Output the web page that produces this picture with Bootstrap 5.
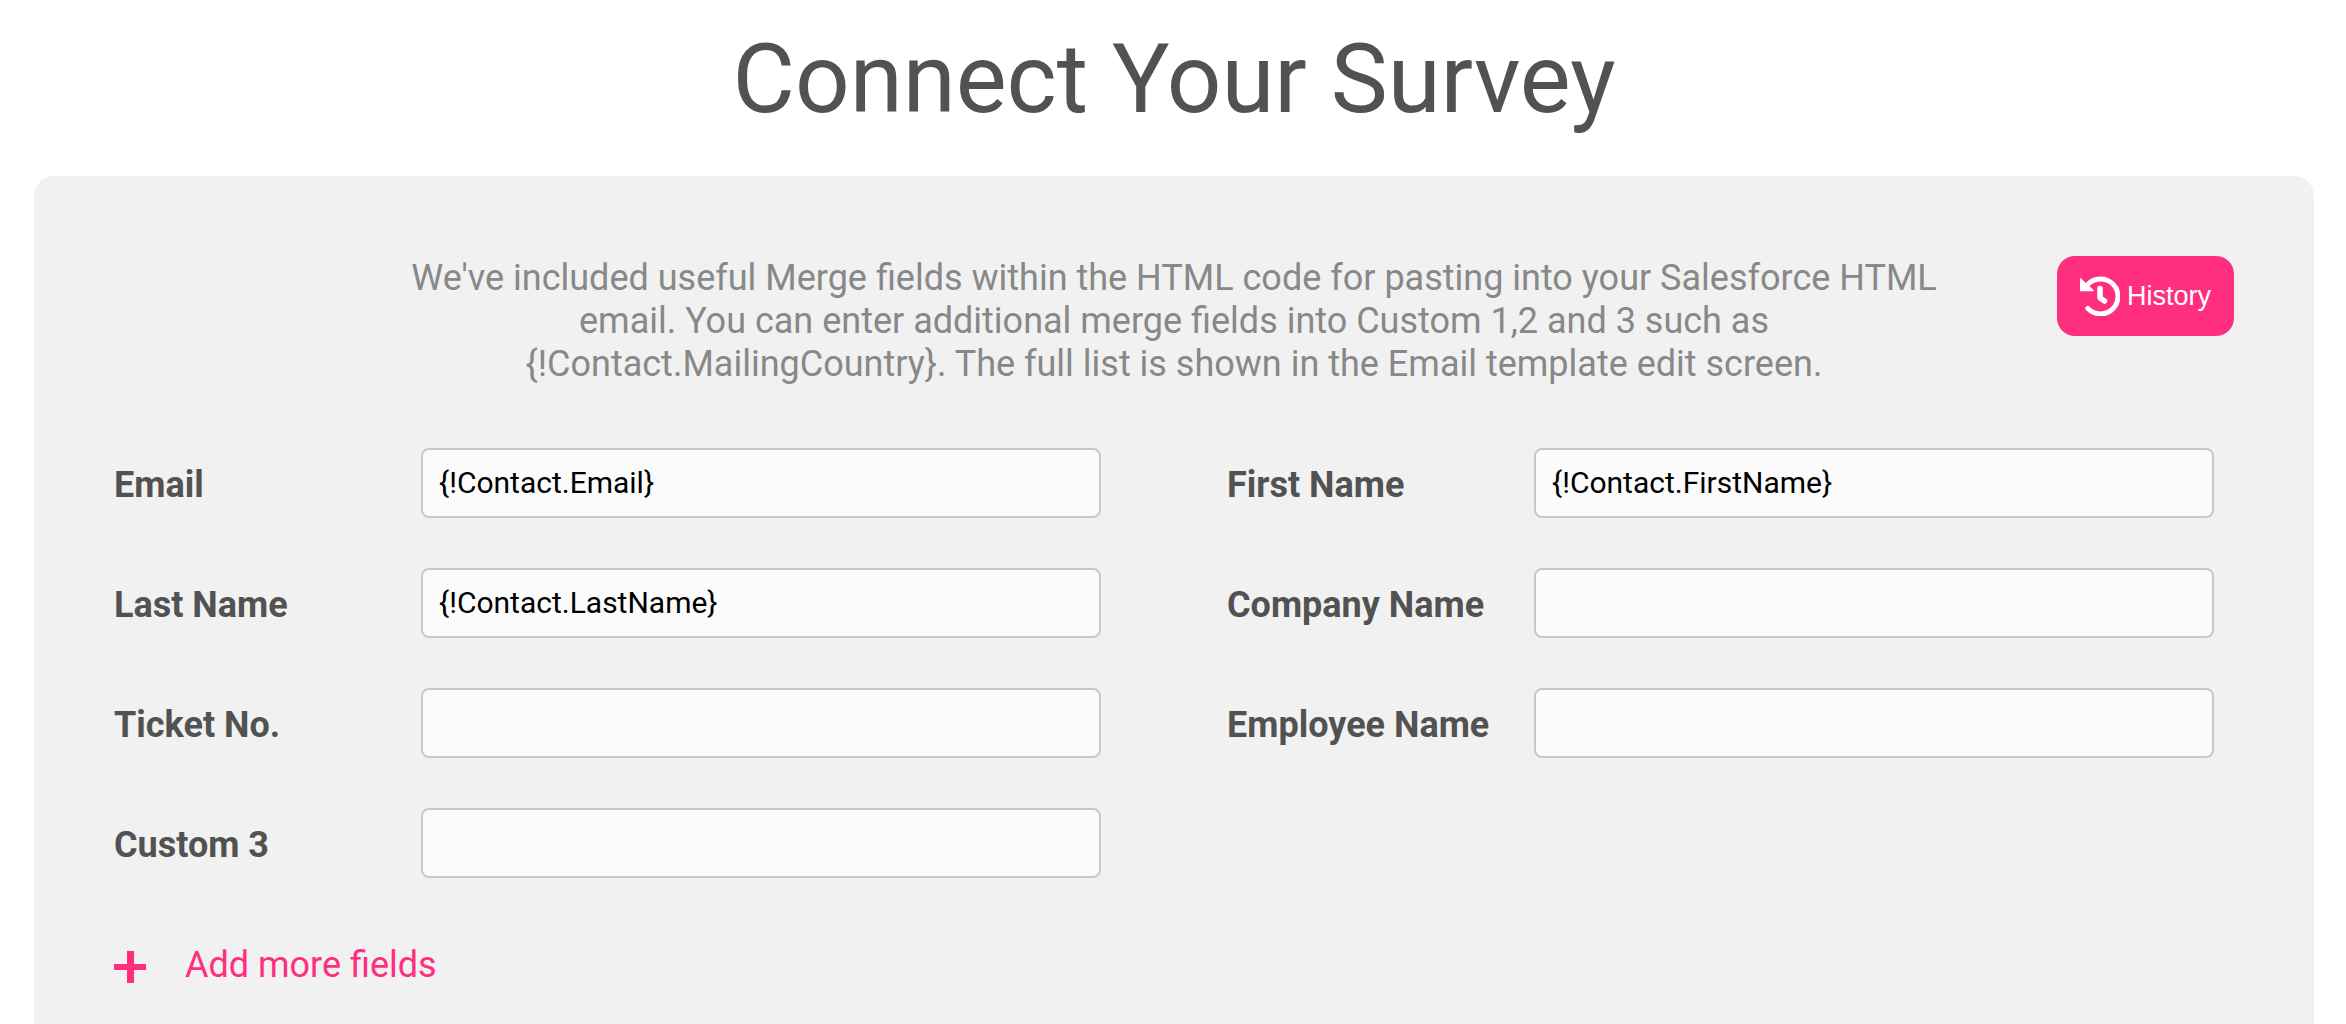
<!DOCTYPE html>
<html lang="en">
<head>
<meta charset="utf-8">
<meta name="viewport" content="width=device-width, initial-scale=1">
<title>Connect Your Survey</title>
<link rel="stylesheet" href="https://cdn.jsdelivr.net/npm/bootstrap@5.3.0/dist/css/bootstrap.min.css">
<style>
  body { font-family: Roboto, "Liberation Sans", sans-serif; font-size: 36px; line-height: 43px; color: #525252; background: #fff; overflow-x: hidden; }
  .page-title { font-size: 96px; line-height: 112px; font-weight: 400; padding: 23px 0 41px 2px; }
  .survey-panel { background: #f1f1f1; border-radius: 20px; margin: 0 32px 0 34px; padding: 80px; }
  .intro-row { display: grid; grid-template-columns: 1fr minmax(0, 1560px) 1fr; margin-bottom: 62px; }
  .intro-text { grid-column: 2; color: #888; padding-top: 1px; }
  .btn-history { font-family: "Liberation Sans", Arial, sans-serif; font-size: 27px; line-height: 32px; height: 80px; padding: 0 23px; gap: 7px; border-radius: 18px;
    --bs-btn-color: #fff; --bs-btn-bg: #ff2e7e; --bs-btn-border-color: #ff2e7e; --bs-btn-hover-color: #fff; --bs-btn-hover-bg: #e6226d; --bs-btn-border-width: 0; }
  .field-grid { display: grid; grid-template-columns: 1fr 1fr; gap: 50px 126px; padding-right: 20px; }
  .field-name { width: 307px; font-weight: 700; padding-top: 4px; }
  .field-box { flex: 1; min-width: 0; height: 70px; padding: 0 16px 2px; border: 2px solid #c8c8c8; border-radius: 8px; background: #fbfbfb; color: #000; font-size: 30px; line-height: 36px; }
  .add-link { margin-top: 66px; gap: 39px; color: #ff2e7e; }
  @media (max-width: 1400px) { .field-grid { grid-template-columns: 1fr; } }
</style>
</head>
<body>
<h1 class="page-title text-center m-0">Connect Your Survey</h1>
<main class="survey-panel">
  <div class="intro-row">
    <p class="intro-text text-center m-0">We've included useful Merge fields within the HTML code for pasting into your Salesforce HTML email. You can enter additional merge fields into Custom 1,2 and 3 such as {!Contact.MailingCountry}. The full list is shown in the Email template edit screen.</p>
    <div class="d-flex justify-content-end align-items-start">
      <button type="button" class="btn btn-history d-flex align-items-center">
        <svg width="40" height="40" viewBox="0 0 40 40" fill="none" stroke="#fff" stroke-width="5" stroke-linecap="round" stroke-linejoin="round" aria-hidden="true">
          <path d="M7.6 8.6A17.5 17.5 0 1 1 7.8 32.4"/>
          <path d="M20 12.500V22L24.500 25" stroke-width="5.500"/>
          <path d="M0 2.500Q0 1.500 1 2.500L13.500 14Q14.500 15.300 13 15.300H0Z" fill="#fff" stroke="none"/>
        </svg>
        <span>History</span>
      </button>
    </div>
  </div>
  <form>
    <div class="field-grid">
      <div class="d-flex align-items-center"><label class="field-name" for="email">Email</label><input class="field-box" id="email" type="text" value="{!Contact.Email}"></div>
      <div class="d-flex align-items-center"><label class="field-name" for="first">First Name</label><input class="field-box" id="first" type="text" value="{!Contact.FirstName}"></div>
      <div class="d-flex align-items-center"><label class="field-name" for="last">Last Name</label><input class="field-box" id="last" type="text" value="{!Contact.LastName}"></div>
      <div class="d-flex align-items-center"><label class="field-name" for="company">Company Name</label><input class="field-box" id="company" type="text"></div>
      <div class="d-flex align-items-center"><label class="field-name" for="ticket">Ticket No.</label><input class="field-box" id="ticket" type="text"></div>
      <div class="d-flex align-items-center"><label class="field-name" for="employee">Employee Name</label><input class="field-box" id="employee" type="text"></div>
      <div class="d-flex align-items-center"><label class="field-name" for="custom3">Custom 3</label><input class="field-box" id="custom3" type="text"></div>
    </div>
    <a href="#" class="add-link d-inline-flex align-items-center text-decoration-none">
      <svg width="32" height="35" viewBox="0 0 32 35" aria-hidden="true"><path d="M13 3H20V16H32V22H20V35H13V22H0V16H13Z" fill="#ff2e7e"/></svg>
      <span>Add more fields</span>
    </a>
  </form>
</main>
<script src="https://cdn.jsdelivr.net/npm/bootstrap@5.3.0/dist/js/bootstrap.bundle.min.js"></script>
</body>
</html>
